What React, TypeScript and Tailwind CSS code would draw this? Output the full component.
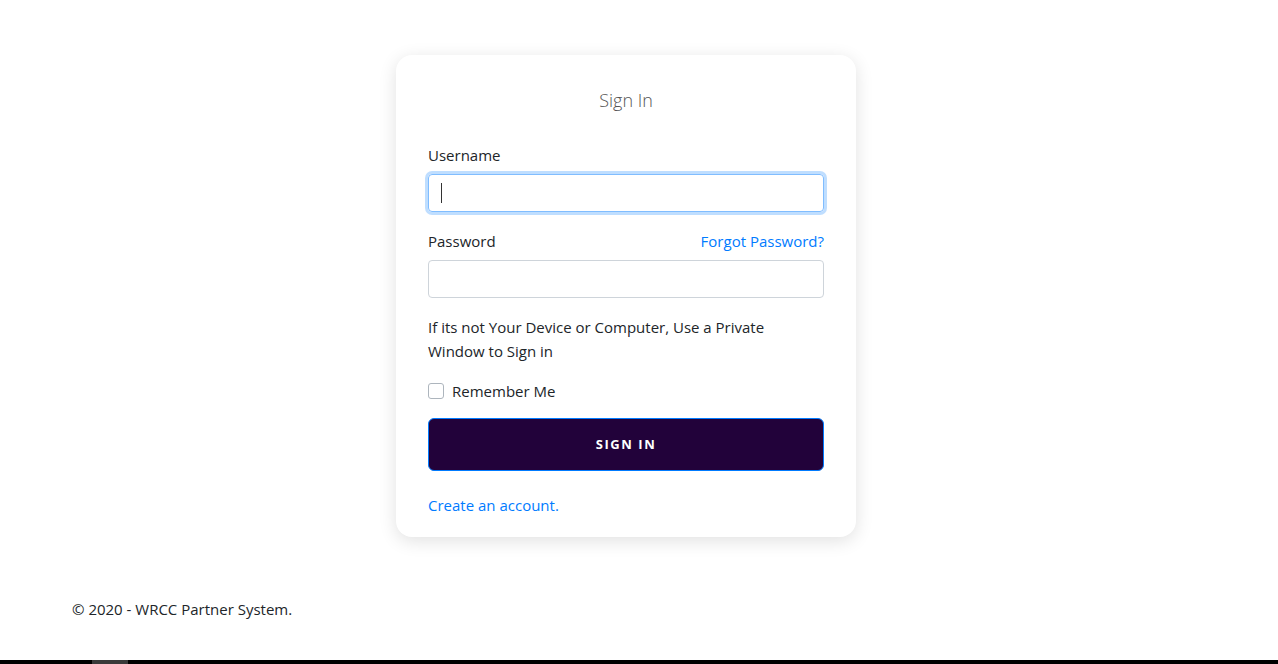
export default function App() {
  return (
    <div className="relative min-h-[664px] bg-white font-['Open_Sans',sans-serif] text-[#212529]">
      <div className="flex justify-center pt-[55px] pr-[26px]">
        <div className="w-[460px] rounded-2xl bg-white px-8 pt-[32px] pb-[21px] shadow-[0_4px_18px_rgba(0,0,0,0.12)]">
          <h1 className="text-center text-[18px] font-light text-[#555]">Sign In</h1>

          <form className="mt-[30px]">
            <label className="block text-[15px] leading-[22px]">Username</label>
            <div className="relative mt-[8px]">
              <input
                type="text"
                className="h-[38px] w-full rounded border border-[#80bdff] px-3 outline-none shadow-[0_0_0_3px_rgba(0,123,255,0.25)]"
              />
              <span className="absolute left-[13px] top-[9px] h-[20px] w-px bg-[#333]" />
            </div>

            <div className="mt-[18px] flex items-center justify-between text-[15px] leading-[22px]">
              <label>Password</label>
              <a href="#" className="text-[#007bff]">Forgot Password?</a>
            </div>
            <input
              type="password"
              className="mt-[8px] block h-[38px] w-full rounded border border-[#ced4da] px-3 outline-none"
            />

            <p className="mt-[17px] text-[15px] leading-[24px]">
              If its not Your Device or Computer, Use a Private Window to Sign in
            </p>

            <label className="mt-[17px] flex items-center gap-2 text-[15px] leading-[22px]">
              <span className="h-4 w-4 rounded-[3px] border border-[#adb5bd] bg-white" />
              Remember Me
            </label>

            <button
              type="button"
              className="mt-[16px] flex h-[53px] w-full items-center justify-center rounded-md border border-[#007bff] bg-[#22023a] text-[13px] font-bold tracking-[0.12em] text-white"
            >
              SIGN IN
            </button>

            <a href="#" className="mt-[23px] block text-[15px] leading-[22px] text-[#007bff]">
              Create an account.
            </a>
          </form>
        </div>
      </div>

      <footer className="mt-[61px] px-[72px] text-[15px] leading-[22px]">
        © 2020 - WRCC Partner System.
      </footer>

      <div className="absolute bottom-0 left-0 right-0 h-1 bg-black">
        <div className="ml-[92px] h-1 w-[36px] bg-[#3a3a3a]" />
      </div>
    </div>
  );
}
